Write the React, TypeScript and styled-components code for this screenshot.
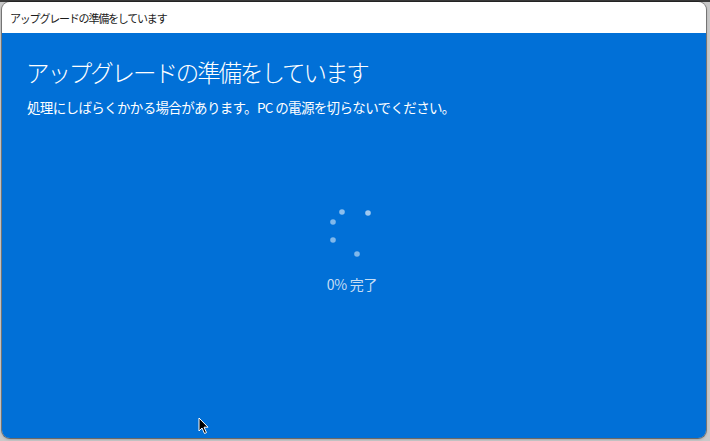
import React from "react";
import styled, { createGlobalStyle } from "styled-components";

const Global = createGlobalStyle`
  html, body { margin: 0; padding: 0; }
  body {
    width: 710px;
    height: 441px;
    overflow: hidden;
    background: linear-gradient(#3a3a3a 0 2px, #c9c9c9 2px);
    font-family: "Noto Sans CJK JP", "Noto Sans", sans-serif;
  }
`;

const Page = styled.div`
  position: relative;
  width: 710px;
  height: 441px;
  box-sizing: border-box;
  padding: 2px 4px 3px 2px;
  display: flex;
`;

const Window = styled.div`
  flex: 1;
  display: flex;
  flex-direction: column;
  border-radius: 8px;
  overflow: hidden;
  box-shadow: 0 0 0 1px rgba(0, 0, 0, 0.35), 0 1px 3px rgba(0, 0, 0, 0.3);
`;

const TitleBar = styled.div`
  height: 31px;
  flex: none;
  background: #ffffff;
  display: flex;
  align-items: center;
  padding: 0 8px;
  box-sizing: border-box;
`;

const TitleText = styled.span`
  font-size: 11px;
  letter-spacing: -1.2px;
  color: #1b1b1b;
  line-height: 14px;
  margin-top: 1px;
`;

const Body = styled.div`
  flex: 1;
  background: #0170d7;
  display: flex;
  flex-direction: column;
  padding: 24px 25px 0 25px;
  color: #ffffff;
`;

const Heading = styled.h1`
  margin: 0 0 0 -1px;
  font-size: 23.5px;
  font-weight: 300;
  letter-spacing: -2.1px;
  line-height: 30px;
  color: #ffffff;
`;

const Sub = styled.p`
  margin: 11px 0 0 0;
  font-size: 13.5px;
  letter-spacing: -0.65px;
  line-height: 18px;
  color: #ffffff;
  white-space: pre;
`;

const Center = styled.div`
  display: flex;
  flex-direction: column;
  align-items: center;
  margin-top: 86px;
  padding-right: 4px;
`;

const Progress = styled.div`
  margin-top: 13px;
  font-size: 14px;
  line-height: 18px;
  color: #c6ddf4;
  letter-spacing: -0.3px;
`;

const Cursor = styled.svg`
  position: absolute;
  left: 198px;
  top: 417px;
`;

const dots: { x: number; y: number; o: number }[] = [
  { x: 20, y: 10, o: 0.55 },
  { x: 46, y: 11, o: 0.62 },
  { x: 11, y: 20, o: 0.5 },
  { x: 11, y: 38, o: 0.5 },
  { x: 35, y: 52, o: 0.5 },
];

export default function App() {
  return (
    <>
      <Global />
      <Page>
        <Window>
          <TitleBar>
            <TitleText>アップグレードの準備をしています</TitleText>
          </TitleBar>
          <Body>
            <Heading>アップグレードの準備をしています</Heading>
            <Sub>処理にしばらくかかる場合があります。PC の電源を切らないでください。</Sub>
            <Center>
              <svg width="60" height="60" viewBox="0 0 60 60">
                {dots.map((d, i) => (
                  <circle key={i} cx={d.x} cy={d.y} r="2.8" fill="#ffffff" fillOpacity={d.o} />
                ))}
              </svg>
              <Progress>0% 完了</Progress>
            </Center>
          </Body>
        </Window>
        <Cursor width="12" height="18" viewBox="0 0 12 18">
          <path d="M1 1 L1 14 L4 11 L6.5 16.5 L8.5 15.6 L6 10.2 L10 10.2 Z" fill="#000" stroke="#fff" strokeWidth="1" strokeLinejoin="round" />
        </Cursor>
      </Page>
    </>
  );
}
